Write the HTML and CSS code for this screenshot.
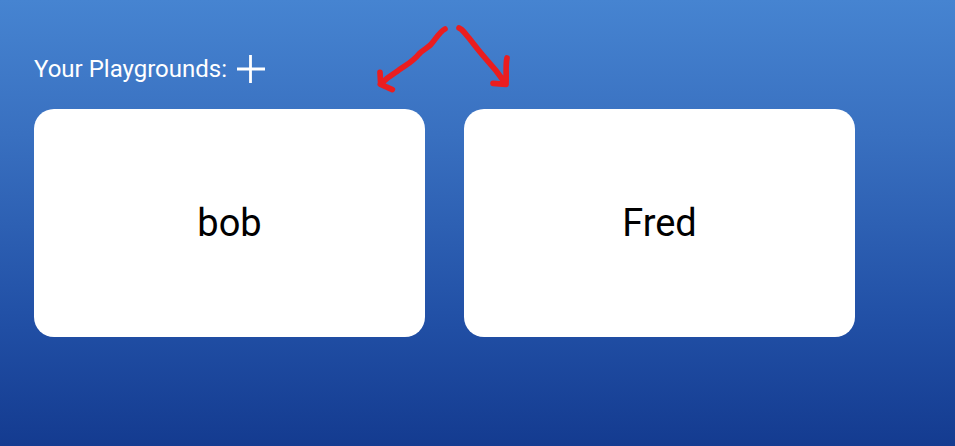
FILE: index.html
```html
<!DOCTYPE html>
<html lang="en">
<head>
<meta charset="utf-8">
<title>Playgrounds</title>
<link rel="stylesheet" href="styles.css">
</head>
<body>
<main class="page">
  <header class="heading">
    <h1 class="title">Your Playgrounds:</h1>
    <button class="add" type="button" aria-label="Add playground">
      <svg width="28" height="28" viewBox="0 0 28 28" aria-hidden="true"><path d="M13.5 0V28M0 14H28" stroke="#fff" stroke-width="2.8"/></svg>
    </button>
  </header>
  <section class="playgrounds">
    <button class="card" type="button">bob</button>
    <button class="card" type="button">Fred</button>
  </section>
  <svg class="arrows" width="160" height="85" viewBox="0 0 480 255" aria-hidden="true">
    <path d="M255 42C238 50 222 80 209 92C199 101 187 106 177 117C156 143 137 150 110 170C91 182 77 192 61 208M60 172L62 208L97 224"/>
    <path d="M297 39C309 43 317 59 327 69C344 91 361 113 377 131C402 158 416 176 438 207M441 129C436 151 440 181 438 208L399 205"/>
  </svg>
</main>
</body>
</html>
```
FILE: styles.css
```css
* {
  box-sizing: border-box;
}

body {
  margin: 0;
  font-family: Roboto, "Liberation Sans", sans-serif;
}

.page {
  position: relative;
  min-height: 100vh;
  padding: 52px 100px 52px 34px;
  background: linear-gradient(#4684d1, #3970c0 30%, #2251a7 70%, #143b90);
}

.heading {
  display: flex;
  align-items: center;
  gap: 10px;
  height: 34px;
  margin-bottom: 23px;
}

.title {
  margin: 0;
  color: #fff;
  font-size: 24px;
  font-weight: 400;
  line-height: 30px;
}

.add {
  display: flex;
  padding: 0;
  border: 0;
  background: none;
  cursor: pointer;
}

.playgrounds {
  display: grid;
  grid-template-columns: 1fr 1fr;
  gap: 39px;
}

.card {
  height: 228px;
  padding: 0;
  border: 0;
  border-radius: 20px;
  background: #fff;
  color: #000;
  font-family: inherit;
  font-size: 38px;
  cursor: pointer;
}

.arrows {
  position: absolute;
  top: 15px;
  left: 360px;
  fill: none;
  stroke: #ea1d1f;
  stroke-width: 17;
  stroke-linecap: round;
  stroke-linejoin: round;
  pointer-events: none;
}
```
